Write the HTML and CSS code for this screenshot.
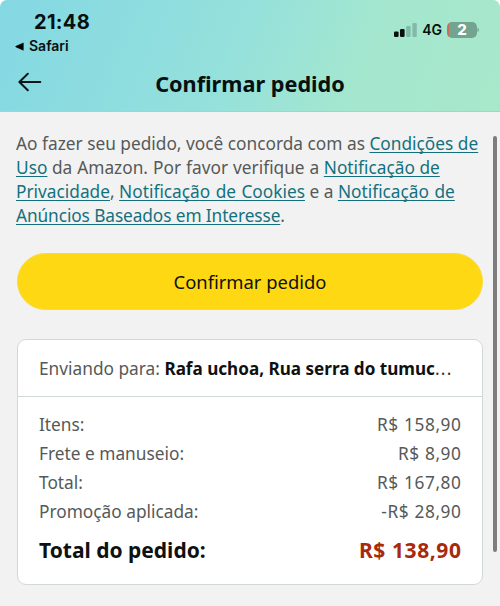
FILE: index.html
```html
<!DOCTYPE html>
<html lang="pt-BR">
<head>
<meta charset="utf-8">
<title>Confirmar pedido</title>
<link rel="stylesheet" href="styles.css">
</head>
<body>
<div class="screen">
  <header class="top">
    <div class="status">
      <div class="status-left">
        <div class="clock">21:48</div>
        <div class="back-app">
          <svg width="9" height="9" viewBox="0 0 9 9"><path d="M8.3 1v7.2L.8 4.9v-.6z" stroke="#07100f" stroke-width=".6" stroke-linejoin="round"/></svg>
          <span>Safari</span>
        </div>
      </div>
      <div class="status-right">
        <svg class="signal" width="24" height="15" viewBox="0 0 24 15">
          <rect x="0" y="8.4" width="4.6" height="5.6" rx="1.2"/>
          <rect x="6" y="6" width="4.6" height="8" rx="1.2"/>
          <rect x="12.2" y="3" width="4.4" height="11" rx="1.2" class="dim"/>
          <rect x="18.4" y="0" width="4.4" height="14" rx="1.2" class="dim"/>
        </svg>
        <span class="network">4G</span>
        <span class="battery"><span class="level">2</span></span>
        <svg width="3" height="6" viewBox="0 0 3 6"><path d="M.5.8Q2 1.4 2 3T.5 5.2z" fill="#72a48f"/></svg>
      </div>
    </div>
    <div class="titlebar">
      <svg class="arrow" width="24" height="20" viewBox="0 0 24 20"><path d="M22.3 10H1.3M9.8 1.7 1.4 10l8.4 8.3" fill="none" stroke="#0b1716" stroke-width="2" stroke-linecap="round" stroke-linejoin="round"/></svg>
      <h1>Confirmar pedido</h1>
    </div>
  </header>
  <main>
    <p class="terms">Ao fazer seu pedido, você concorda com as <a>Condições de<br>Uso</a> <span class="wide">da Amazon. Por favor verifique a</span> <a>Notificação de<br>Privacidade</a>, <a class="cookies">Notificação de Cookies</a> e a <a class="cookies">Notificação de<br><span class="tight">Anúncios Baseados em Interesse</span></a>.</p>
    <button class="confirm">Confirmar pedido</button>
    <section class="card">
      <div class="ship">Enviando para: <b>Rafa uchoa, Rua serra do tumuc</b><span class="dots">...</span></div>
      <div class="summary">
        <div class="row"><span>Itens:</span><span class="price">R$ 158,90</span></div>
        <div class="row"><span>Frete e manuseio:</span><span class="price">R$ 8,90</span></div>
        <div class="row"><span>Total:</span><span class="price">R$ 167,80</span></div>
        <div class="row"><span>Promoção aplicada:</span><span class="price">-R$ 28,90</span></div>
        <div class="row total"><span>Total do pedido:</span><span class="price">R$ 138,90</span></div>
      </div>
    </section>
  </main>
  <div class="scrollbar"></div>
</div>
</body>
</html>
```
FILE: styles.css
```css
* { box-sizing: border-box; }
body {
  margin: 0;
  background: #fff;
  color: #565959;
  font: 17.3px/24px "Noto Sans", sans-serif;
}
.screen {
  position: relative;
  height: 606px;
  background: #f2f2f2;
  border-radius: 7px 7px 0 0;
  overflow: hidden;
}
.top {
  height: 112px;
  background: linear-gradient(112deg, #84d8e3 0%, #94e0dc 45%, #a4e7cf 72%, #a8e8cb 100%);
  border-bottom: 1px solid #b0cdc8;
  color: #07100f;
}
.status {
  display: flex;
  justify-content: space-between;
  height: 59px;
  padding: 10px 20px 0 15px;
  font-family: Inter, sans-serif;
}
.clock {
  margin-left: 19px;
  font-size: 20px;
  font-weight: 700;
  line-height: 24px;
  letter-spacing: .3px;
}
.back-app {
  display: flex;
  align-items: center;
  gap: 5px;
  margin-top: 2px;
  font-size: 14px;
  font-weight: 600;
  line-height: 20px;
}
.status-right {
  display: flex;
  align-items: center;
  height: 40px;
}
.signal { margin-right: 4px; fill: #07100f; }
.signal .dim { fill: #80baa9; }
.network {
  margin-right: 5px;
  font-size: 14px;
  font-weight: 600;
}
.battery {
  width: 30px;
  height: 16px;
  border-radius: 5px;
  background: linear-gradient(90deg, #c86c5b 2px, #72a48f 2px);
  color: #fff;
  text-align: center;
}
.level {
  display: block;
  font-size: 15px;
  font-weight: 800;
  line-height: 16px;
}
.titlebar {
  display: grid;
  grid-template-columns: 24px 1fr 24px;
  align-items: center;
  height: 48px;
  padding: 0 18px;
}
.arrow { margin-bottom: 2px; }
h1 {
  margin: 2px 0 0;
  font-size: 21.7px;
  font-weight: 700;
  line-height: 30px;
  text-align: center;
}
main { padding: 20px 17px 0; }
.terms {
  margin: 0 -12px 0 -1px;
  white-space: nowrap;
}
.terms a {
  color: #13717f;
  text-decoration: underline;
  text-decoration-thickness: 1px;
  text-decoration-skip-ink: none;
  text-underline-offset: 2px;
}
.wide { word-spacing: .5px; }
.cookies { word-spacing: .9px; }
.tight { letter-spacing: -.1px; word-spacing: 0; }
.confirm {
  display: block;
  width: 100%;
  height: 57px;
  margin: 25px 0 29px;
  padding: 0;
  border: 1px solid #f8da3c;
  border-radius: 29px;
  background: #ffd814;
  color: #0f1111;
  font: 18.4px/24px "Noto Sans", sans-serif;
}
.card {
  height: 246px;
  border: 1px solid #d2d8d8;
  border-radius: 9px;
  background: #fff;
}
.ship {
  height: 57px;
  padding: 17px 0 0 21px;
  border-bottom: 1px solid #d2d8d8;
  white-space: nowrap;
}
.ship b { font-size: 17.1px; color: #0f1111; }
.dots { letter-spacing: 1.3px; color: #333; }
.summary { padding: 13px 21px 0; }
.row {
  display: flex;
  justify-content: space-between;
  line-height: 29px;
}
.price { letter-spacing: .6px; margin-right: -.6px; }
.total {
  margin-top: 10px;
  font-size: 21px;
  font-weight: 700;
  color: #0f1111;
}
.total .price { color: #a82a0c; }
.scrollbar {
  position: absolute;
  top: 136px;
  right: 3px;
  width: 4px;
  height: 416px;
  border-radius: 2px;
  background: #7d7d7d;
}
```
